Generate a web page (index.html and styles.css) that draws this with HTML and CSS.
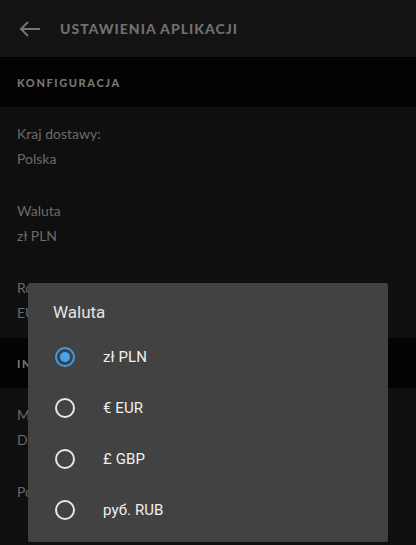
FILE: index.html
```html
<!DOCTYPE html>
<html lang="pl">
<head>
<meta charset="utf-8">
<link rel="stylesheet" href="styles.css">
</head>
<body>
<div class="screen">
  <header class="topbar">
    <svg class="back" width="24" height="24" viewBox="0 0 24 24"><path d="M22 12H3M10 5l-7 7 7 7" fill="none" stroke="currentColor" stroke-width="2"/></svg>
    <span class="title">USTAWIENIA APLIKACJI</span>
  </header>
  <div class="band">KONFIGURACJA</div>
  <div class="item"><div class="lbl">Kraj dostawy:</div><div class="val">Polska</div></div>
  <div class="item"><div class="lbl">Waluta</div><div class="val">zł PLN</div></div>
  <div class="item"><div class="lbl">Rozmiar</div><div class="val">EU</div></div>
  <div class="band">INFORMACJE</div>
  <div class="item"><div class="lbl">Moje dane</div><div class="val">Dane</div></div>
  <div class="item"><div class="lbl">Pomoc</div><div class="val"></div></div>

  <div class="dialog">
    <div class="dtitle">Waluta</div>
    <div class="opt"><span class="radio on"></span><span class="olbl">zł PLN</span></div>
    <div class="opt"><span class="radio"></span><span class="olbl">€ EUR</span></div>
    <div class="opt"><span class="radio"></span><span class="olbl">£ GBP</span></div>
    <div class="opt"><span class="radio"></span><span class="olbl">руб. RUB</span></div>
  </div>
</div>
</body>
</html>
```
FILE: styles.css
```css
html, body { margin: 0; padding: 0; }
body { background: #0f0f0f; width: 416px; height: 545px; overflow: hidden; font-family: Lato, "Open Sans", sans-serif; }
.screen { position: relative; width: 416px; height: 545px; background: #0f0f0f; }
.topbar { height: 57px; background: #131313; display: flex; align-items: center; padding-left: 18px; box-sizing: border-box; color: #747474; }
.back { flex: none; }
.title { margin-left: 18px; font-weight: 900; font-size: 14px; letter-spacing: 1px; color: #6f6f6f; }
.band { height: 50px; background: #030303; display: flex; align-items: center; padding-left: 17px; font-size: 11px; font-weight: 900; letter-spacing: 1.6px; color: #767676; }
.item { height: 77px; box-sizing: border-box; padding: 15px 17px 0; color: #6a6a6a; font-size: 14px; line-height: 24px; }
.lbl { height: 24px; }
.val { height: 24px; margin-top: 1px; }
.dialog { position: absolute; left: 28px; top: 283px; width: 360px; height: 259px; box-sizing: border-box; background: #424242; border-radius: 2px; padding: 17px 0 7px; font-family: Roboto, "Noto Sans", sans-serif; }
.dtitle { height: 24px; line-height: 24px; padding-left: 25px; font-size: 17px; color: #e4e4e4; margin-bottom: 7px; }
.opt { height: 51px; display: flex; align-items: center; padding-left: 27px; }
.radio { width: 20px; height: 20px; box-sizing: border-box; border: 2px solid #e8e8e8; border-radius: 50%; flex: none; position: relative; }
.radio.on { border-color: #3d9be9; }
.radio.on::after { content: ""; position: absolute; left: 3px; top: 3px; width: 10px; height: 10px; border-radius: 50%; background: #42a5f5; }
.olbl { margin-left: 28px; font-size: 15px; font-weight: 400; color: #f0f0f0; letter-spacing: 0.1px; }
```
